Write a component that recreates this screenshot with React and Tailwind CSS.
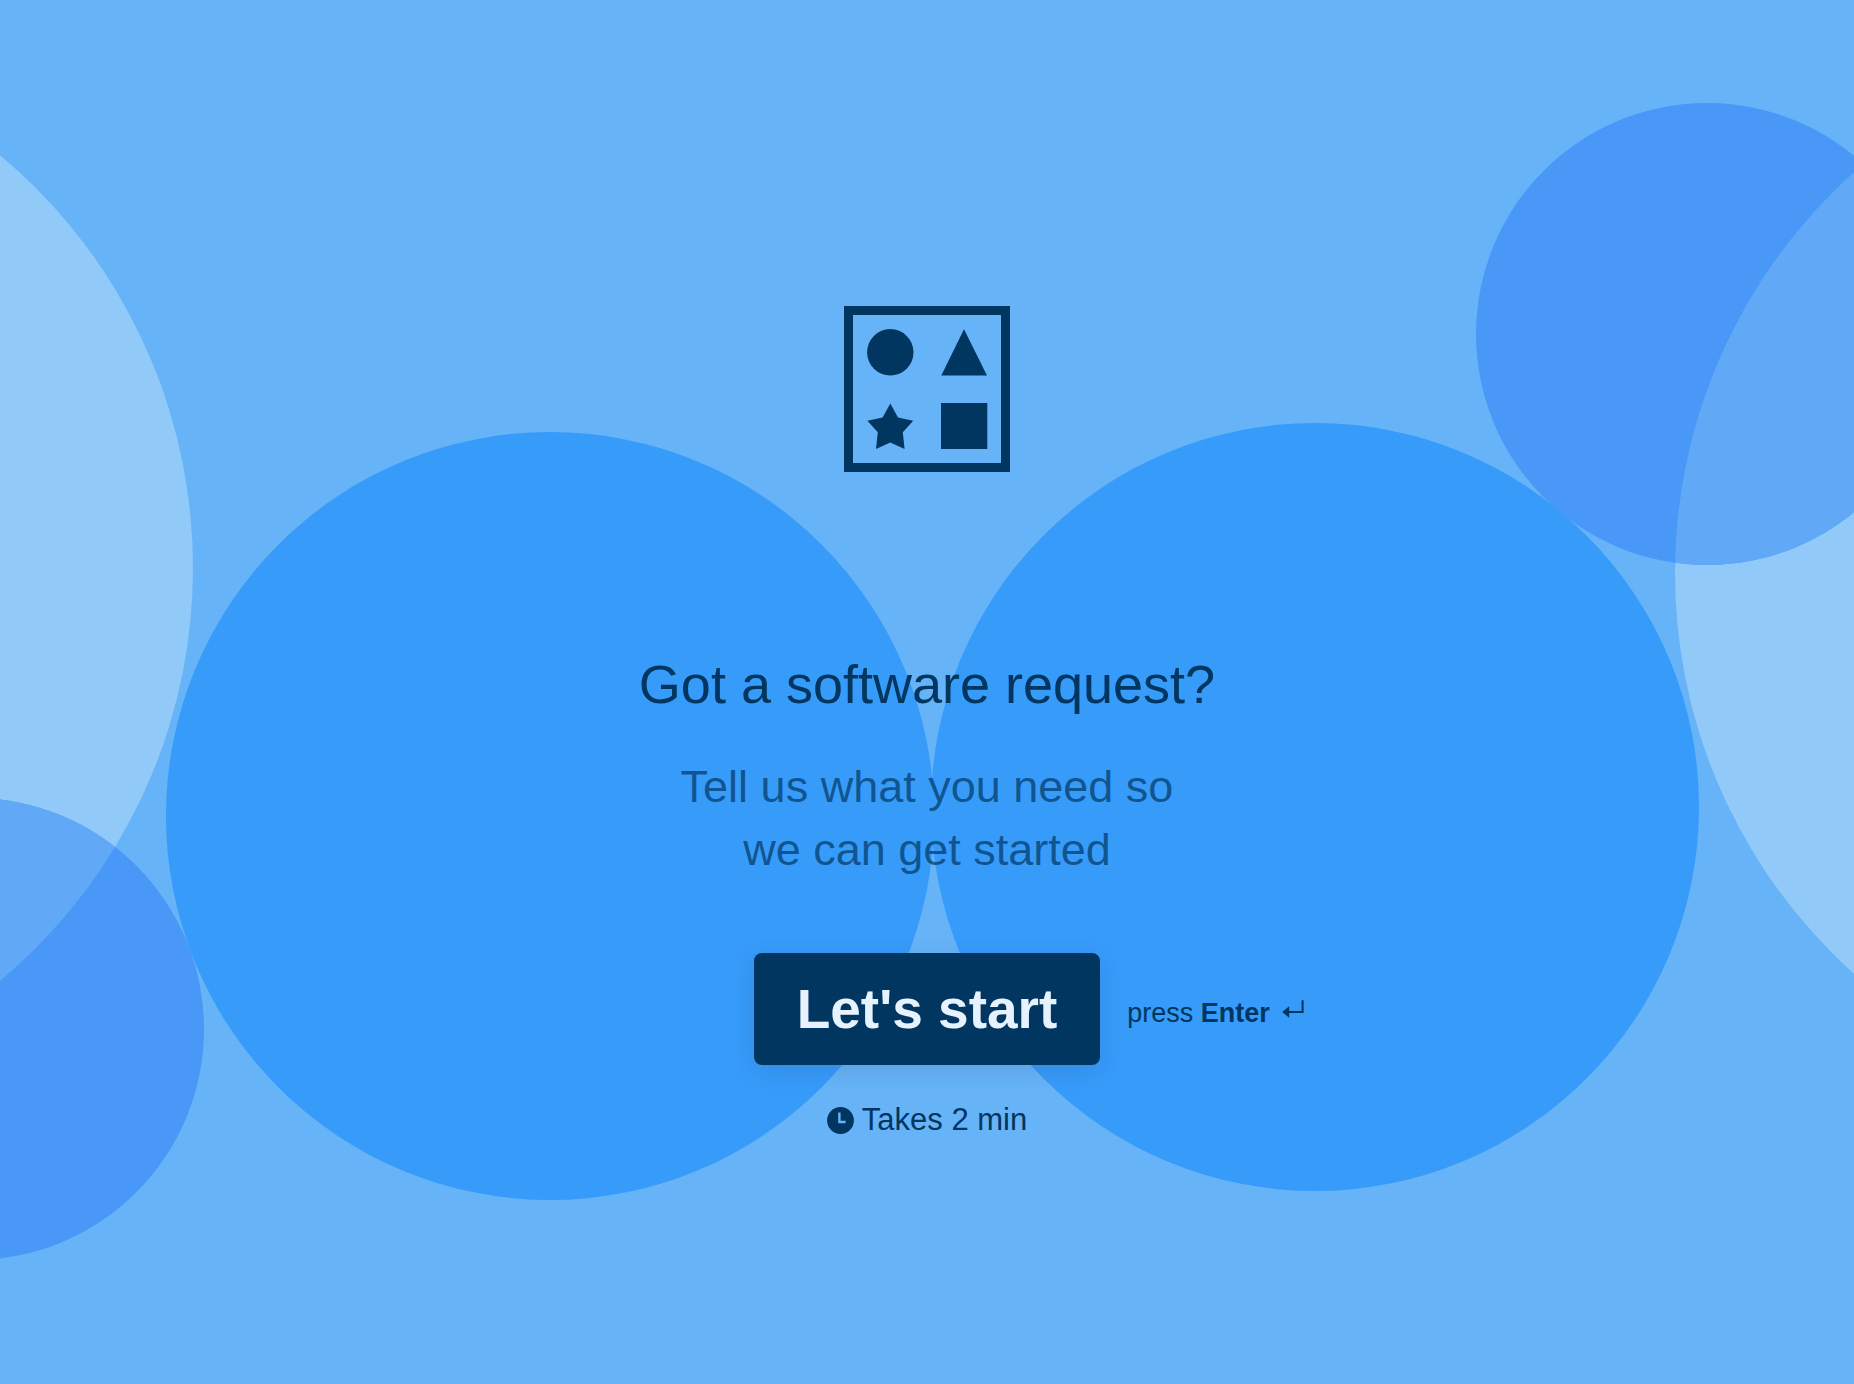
import { useEffect, useState } from "react"

const circles = [
    { id: "blue-left", cx: 550, cy: 816, r: 384, fill: "#379bfa" },
    { id: "blue-right", cx: 1315, cy: 807, r: 384, fill: "#379bfa" },
];

// each side has a big light circle with a violet one crossing it
const pairs = [
    {
        id: "left",
        light: { cx: -345, cy: 568, r: 538 },
        violet: { cx: -27, cy: 1029, r: 231 },
    },
    {
        id: "right",
        light: { cx: 2213, cy: 573, r: 538 },
        violet: { cx: 1707, cy: 334, r: 231 },
    },
];

function Background() {
    return (
        <svg
            className="absolute inset-0 w-full h-full"
            viewBox="0 0 1854 1384"
            preserveAspectRatio="xMidYMid slice"
            aria-hidden="true"
        >
            {circles.map(({ id, ...circle }) => (
                <circle key={id} {...circle} />
            ))}
            {pairs.map(({ id, light, violet }) => (
                <g key={id}>
                    <clipPath id={`clip-${id}`}>
                        <circle {...violet} />
                    </clipPath>
                    <circle {...light} fill="#91c9f9" />
                    <circle {...violet} fill="#4998f8" />
                    <circle {...light} fill="#61a9f7" clipPath={`url(#clip-${id})`} />
                </g>
            ))}
        </svg>
    )
}

function Logo() {
    return (
        <svg className="w-[166px] h-[166px]" viewBox="0 0 166 166" fill="currentColor" aria-hidden="true">
            <rect x="4.5" y="4.5" width="157" height="157" fill="none" stroke="currentColor" strokeWidth="9" />
            <circle cx="46.3" cy="46.3" r="23.2" />
            <path d="M120 23.3 143 69.6H97.3Z" />
            <path d="M46.3 97.6 54 111.4 69.2 114.7 58.8 126.2 60.6 143 46.3 136.4 32 143 33.8 126.2 23.4 114.7 38.6 111.4Z" />
            <rect x="97" y="97" width="46.3" height="46" />
        </svg>
    )
}

function EnterIcon() {
    return (
        <svg className="w-[22px] h-[18px]" viewBox="0 0 22 18" aria-hidden="true">
            <path d="M20.6 .2V12H6" fill="none" stroke="currentColor" strokeWidth="2" />
            <path d="M.2 12 7.2 6.2V17.8Z" fill="currentColor" />
        </svg>
    )
}

function ClockIcon() {
    return (
        <svg className="w-[27px] h-[27px]" viewBox="0 0 27 27" aria-hidden="true">
            <circle cx="13.5" cy="13.5" r="13.4" fill="currentColor" />
            <path d="M12.4 5.4V15H18.6" fill="none" stroke="#66b3f8" strokeWidth="2.4" />
        </svg>
    )
}

function App() {
    const [started, setStarted] = useState(false)

    useEffect(() => {
        function handleKeyDown(e) {
            if (e.key === "Enter") setStarted(true);
        }

        window.addEventListener("keydown", handleKeyDown);
        return () => window.removeEventListener("keydown", handleKeyDown);
    }, [])

    return (
        <main className="relative min-h-screen w-full overflow-hidden bg-[#66b3f8] text-[#003660] font-['Liberation_Sans',Arial,sans-serif]">
            <Background />
            <div className="relative min-h-screen flex flex-col items-center justify-center pt-[60px]">
                <Logo />
                <h1 className="mt-[179px] text-[54px] leading-[66px] text-center">Got a software request?</h1>
                <p className="mt-[38px] text-[45px] leading-[63px] text-center text-[#003660]/70">
                    Tell us what you need so
                    <br />
                    we can get started
                </p>
                <div className="mt-[72px] w-full grid grid-cols-[1fr_auto_1fr] items-center">
                    <button
                        type="button"
                        aria-pressed={started}
                        onClick={() => setStarted(true)}
                        className="col-start-2 h-28 px-[43px] rounded-lg cursor-pointer bg-[#003660] text-[#e6f3fe] text-[55px] font-bold shadow-[0_6px_24px_rgba(0,0,0,0.1)]"
                    >
                        Let's start
                    </button>
                    <div className="ml-[27px] flex items-center gap-3 text-[27px] leading-9 pt-2">
                        <span>press <strong>Enter</strong></span>
                        <span className="pb-2"><EnterIcon /></span>
                    </div>
                </div>
                <div className="mt-[37px] flex items-center gap-2 text-[31px] leading-9">
                    <ClockIcon />
                    <span>Takes 2 min</span>
                </div>
            </div>
        </main>
    )
}

export default App
